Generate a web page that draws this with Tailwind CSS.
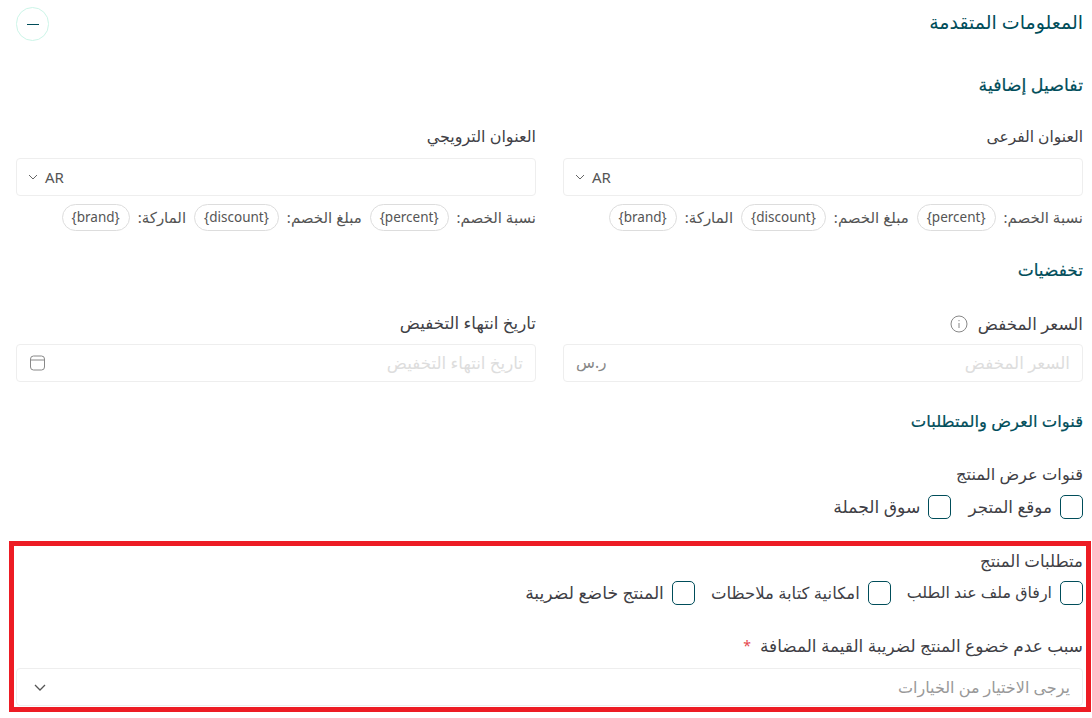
<!DOCTYPE html>
<html lang="ar" dir="rtl">
<head>
  <meta charset="UTF-8" />
  <title>المعلومات المتقدمة</title>
  <script src="https://cdn.jsdelivr.net/npm/@tailwindcss/browser@4"></script>
</head>
<body class="bg-white h-[718px] overflow-hidden relative font-['Noto_Sans','DejaVu_Sans',sans-serif] text-[14px] text-[#3f3f46]">
  <main class="pr-[9px] pl-4 pt-[7px] flex flex-col">

    <!-- Header -->
    <header class="h-[34px] flex justify-between items-center">
      <h1 class="text-[19px] text-[#004d5a] pb-1">المعلومات المتقدمة</h1>
      <button class="w-[33px] h-[34px] rounded-full border border-[#ccf5e8] flex items-center justify-center">
        <span class="w-3 h-px bg-[#004d5a]"></span>
      </button>
    </header>

    <h2 class="mt-[32px] h-6 leading-[22px] text-[17.4px] [-webkit-text-stroke:0.2px] text-[#004d5a]">تفاصيل إضافية</h2>
    <div class="grid grid-cols-2 gap-x-[27px] mt-[28px]">
      <div>
        <label class="block h-6 leading-[22px] text-[15.5px]">العنوان الفرعى</label>
        <div class="mt-[9px] h-[38px] border border-[#eeeeee] rounded-[4px] flex items-center justify-end gap-[7px] px-[11px]">
          <span class="text-[15px] text-[#555]">AR</span>
          <svg class="w-[10px] h-[6px] text-[#666]" viewBox="0 0 10 6" fill="none" stroke="currentColor"><path d="M1 1l4 4 4-4"/></svg>
        </div>
        <div class="mt-2 h-[27px] flex items-center gap-2 text-[15px] text-[#555]">
          <span>نسبة الخصم:</span><span class="h-[27px] px-[9px] text-[13.5px] rounded-full border border-[#ddd] flex items-center">{percent}</span>
          <span>مبلغ الخصم:</span><span class="h-[27px] px-[9px] text-[13.5px] rounded-full border border-[#ddd] flex items-center">{discount}</span>
          <span>الماركة:</span><span class="h-[27px] px-[9px] text-[13.5px] rounded-full border border-[#ddd] flex items-center">{brand}</span>
        </div>
      </div>
      <div>
        <label class="block h-6 leading-[22px] text-[16px]">العنوان الترويجي</label>
        <div class="mt-[9px] h-[38px] border border-[#eeeeee] rounded-[4px] flex items-center justify-end gap-[7px] px-[11px]">
          <span class="text-[15px] text-[#555]">AR</span>
          <svg class="w-[10px] h-[6px] text-[#666]" viewBox="0 0 10 6" fill="none" stroke="currentColor"><path d="M1 1l4 4 4-4"/></svg>
        </div>
        <div class="mt-2 h-[27px] flex items-center gap-2 text-[15px] text-[#555]">
          <span>نسبة الخصم:</span><span class="h-[27px] px-[9px] text-[13.5px] rounded-full border border-[#ddd] flex items-center">{percent}</span>
          <span>مبلغ الخصم:</span><span class="h-[27px] px-[9px] text-[13.5px] rounded-full border border-[#ddd] flex items-center">{discount}</span>
          <span>الماركة:</span><span class="h-[27px] px-[9px] text-[13.5px] rounded-full border border-[#ddd] flex items-center">{brand}</span>
        </div>
      </div>
    </div>

    <h2 class="mt-[28px] h-6 leading-[22px] text-[17px] [-webkit-text-stroke:0.2px] text-[#004d5a]">تخفضيات</h2>
    <div class="grid grid-cols-2 gap-x-[27px] mt-[29px]">
      <div>
        <label class="h-6 leading-[22px] text-[16.7px] flex items-center gap-[10px]">السعر المخفض
          <svg class="w-[18px] h-[18px] text-[#888]" viewBox="0 0 18 18" fill="none" stroke="currentColor"><circle cx="9" cy="9" r="8"/><path d="M9 8v5M9 5v1.2"/></svg>
        </label>
        <div class="mt-2 h-[38px] border border-[#eeeeee] rounded-[4px] flex items-center justify-between px-[12px] text-[16.7px]">
          <span class="text-[#ddd]">السعر المخفض</span><span class="text-[#888] text-[15.5px]">ر.س</span>
        </div>
      </div>
      <div>
        <label class="block h-6 leading-[22px] text-[16.7px]">تاريخ انتهاء التخفيض</label>
        <div class="mt-2 h-[38px] border border-[#eeeeee] rounded-[4px] flex items-center justify-between pr-[12px] pl-[13px] text-[16.7px]">
          <span class="text-[#ddd]">تاريخ انتهاء التخفيض</span>
          <svg class="w-[15px] h-[16px] text-[#888]" viewBox="0 0 15 16" fill="none" stroke="currentColor"><rect x=".5" y="1" width="14" height="14" rx="3"/><path d="M.5 5h14"/></svg>
        </div>
      </div>
    </div>

    <h2 class="mt-[27px] h-6 leading-6 text-[16.4px] [-webkit-text-stroke:0.2px] text-[#004d5a]">قنوات العرض والمتطلبات</h2>
    <label class="mt-[30px] block h-6 leading-[22px] text-[16.3px]">قنوات عرض المنتج</label>
    <div class="mt-2 h-6 flex items-center gap-[17px]">
      <div class="flex items-center gap-2 text-[16.8px]"><span class="w-[23px] h-[24px] rounded-[5px] border-[1.5px] border-[#004d5a]"></span>موقع المتجر</div>
      <div class="flex items-center gap-2 text-[17.2px]"><span class="w-[23px] h-[24px] rounded-[5px] border-[1.5px] border-[#004d5a]"></span>سوق الجملة</div>
    </div>

    <label class="mt-[30px] block h-6 leading-6 text-[16.6px]">متطلبات المنتج</label>
    <div class="mt-2 h-6 flex items-center gap-[16px]">
      <div class="flex items-center gap-2 text-[15.9px]"><span class="w-[23px] h-[24px] rounded-[5px] border-[1.5px] border-[#004d5a]"></span>ارفاق ملف عند الطلب</div>
      <div class="flex items-center gap-2 text-[16.5px]"><span class="w-[23px] h-[24px] rounded-[5px] border-[1.5px] border-[#004d5a]"></span>امكانية كتابة ملاحظات</div>
      <div class="flex items-center gap-2 text-[17.2px]"><span class="w-[23px] h-[24px] rounded-[5px] border-[1.5px] border-[#004d5a]"></span>المنتج خاضع لضريبة</div>
    </div>

    <label class="mt-[29px] h-6 leading-6 text-[16.9px] flex gap-[9px]">سبب عدم خضوع المنتج لضريبة القيمة المضافة <span class="text-[#e5484d] text-[14px]">*</span></label>
    <div class="mt-[10px] h-[38px] border border-[#eeeeee] rounded-[4px] flex items-center justify-between pr-[12px] pl-[17px] text-[16px]">
      <span class="text-[#999]">يرجى الاختيار من الخيارات</span>
      <svg class="w-[12px] h-[7px] text-[#555]" viewBox="0 0 12 7" fill="none" stroke="currentColor" stroke-width="1.3"><path d="M1 1l5 5 5-5"/></svg>
    </div>
  </main>

  <!-- Red highlight frame -->
  <div class="absolute left-[9px] top-[541px] w-[1082px] h-[171px] border-[5px] border-[#ed1c24] pointer-events-none"></div>
</body>
</html>
